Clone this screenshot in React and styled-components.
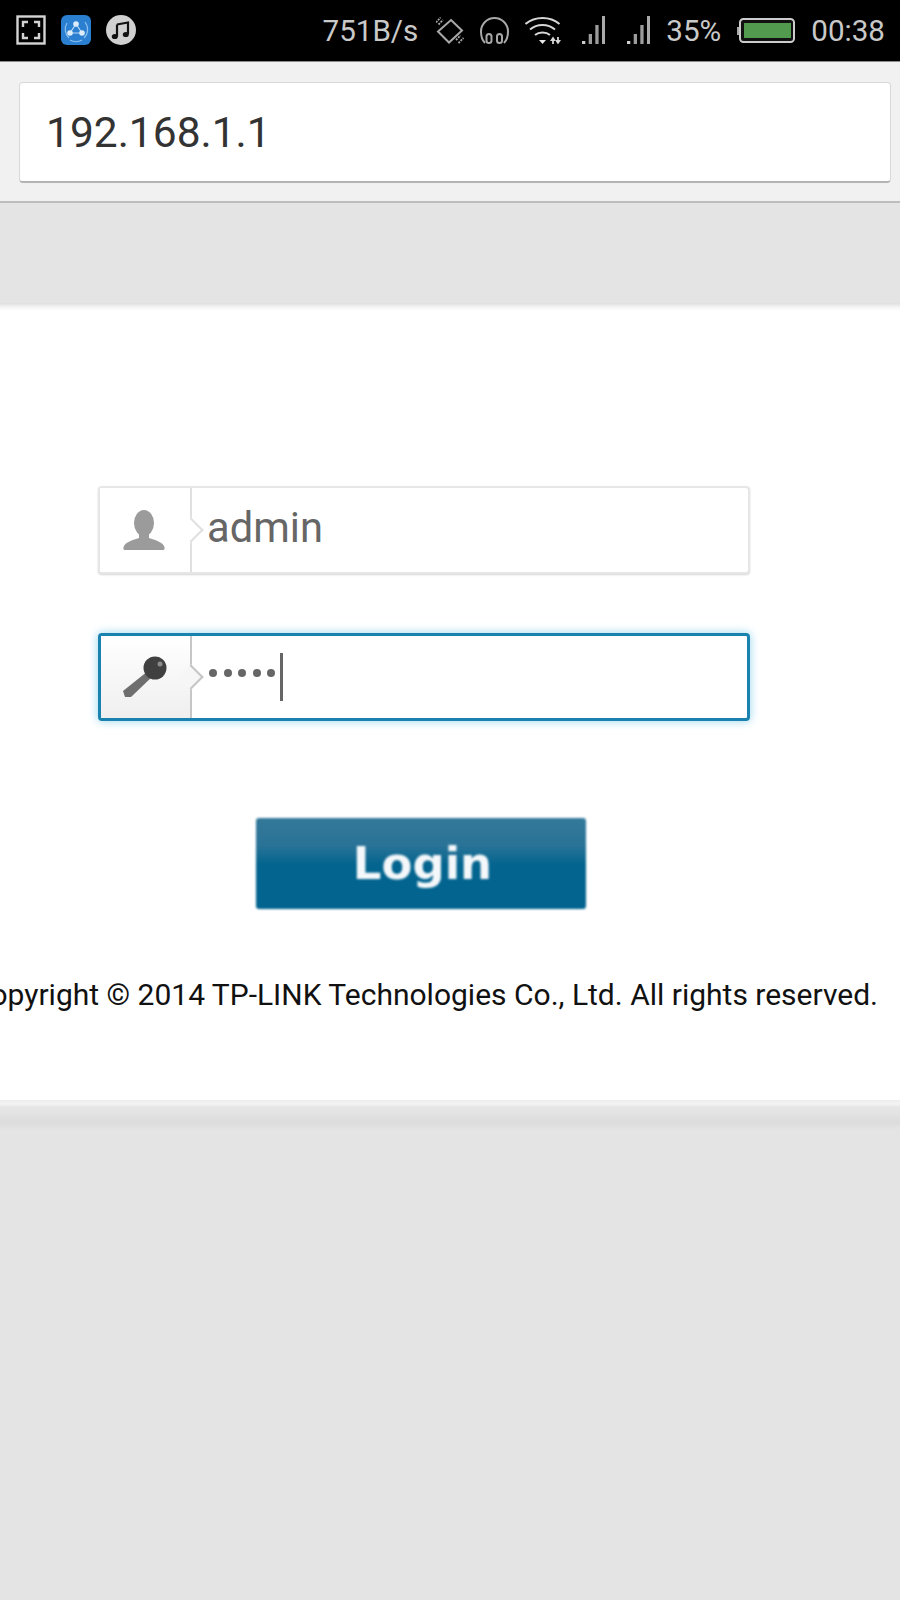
import React from "react";
import styled, { createGlobalStyle } from "styled-components";

const GlobalStyle = createGlobalStyle`
  html, body {
    margin: 0;
    padding: 0;
    background: #e4e4e4;
    font-family: Roboto, "Liberation Sans", sans-serif;
  }
`;

const Page = styled.div`
  width: 900px;
  height: 1600px;
  overflow: hidden;
  display: flex;
  flex-direction: column;
  background: #e4e4e4;
`;

const StatusBar = styled.div`
  height: 62px;
  flex: none;
  box-sizing: border-box;
  padding: 0 15px 1px 16px;
  background: #000;
  color: #c9c9c9;
  display: flex;
  align-items: center;
  justify-content: space-between;
  font-size: 29.6px;
  border-bottom: 1px solid #8a8a8a;
`;

const IconGroup = styled.div`
  display: flex;
  align-items: center;
  gap: ${(p) => p.$gap}px;
`;

const StatusText = styled.span`
  display: block;
  line-height: 1;
  position: relative;
  top: 2px;
  margin-right: ${(p) => p.$mr || 0}px;
`;

const SignalSlot = styled.span`
  display: flex;
  margin-left: ${(p) => p.$ml || 0}px;
`;

const AddressBar = styled.div`
  height: 141px;
  flex: none;
  box-sizing: border-box;
  padding: 20px 9px 18px 19px;
  background: #f1f1f1;
  border-bottom: 2px solid #bdbdbd;
`;

const AddressField = styled.div`
  height: 101px;
  box-sizing: border-box;
  padding-left: 26px;
  background: #fff;
  border: 1px solid #d8d8d8;
  border-bottom: 2px solid #b4b4b4;
  border-radius: 4px;
  display: flex;
  align-items: center;
  font-size: 42.5px;
  color: #333;
`;

const Band = styled.div`
  height: 100px;
  flex: none;
  background: #e4e4e4;
`;

const LoginPanel = styled.div`
  flex: none;
  height: 797px;
  box-sizing: border-box;
  padding-top: 183px;
  background: linear-gradient(#dedede, #f4f4f4 4px, #fff 8px);
  display: flex;
  flex-direction: column;
`;

const FieldRow = styled.div`
  width: 652px;
  height: 88px;
  margin: 0 0 59px 98px;
  box-sizing: border-box;
  flex: none;
  background: #fff;
  border-radius: 4px;
  display: flex;
  border: ${(p) => (p.$focused ? "3px solid #1a82ae" : "2px solid #e6e6e6")};
  box-shadow: ${(p) => (p.$focused ? "0 0 8px 1px #a9dcf0" : "0 1px 2px #d4d4d4")};
`;

const FieldIcon = styled.div`
  --line: ${(p) => (p.$focused ? "#c6c6c6" : "#e0e0e0")};
  --fill: ${(p) => (p.$focused ? "#f6f6f6" : "#fff")};
  width: ${(p) => (p.$focused ? 91 : 92)}px;
  flex: none;
  display: flex;
  align-items: center;
  justify-content: center;
  position: relative;
  box-sizing: border-box;
  padding-right: 2px;
  background: ${(p) => (p.$focused ? "linear-gradient(#fff, #efefef)" : "#fff")};
  border-right: 2px solid var(--line);

  &::after {
    content: "";
    position: absolute;
    right: -10px;
    top: 50%;
    width: 18px;
    height: 18px;
    margin-top: -9px;
    box-sizing: border-box;
    background: var(--fill);
    border-top: 2px solid var(--line);
    border-right: 2px solid var(--line);
    transform: rotate(45deg);
  }

  & > svg {
    filter: blur(0.7px);
  }
`;

const FieldValue = styled.div`
  flex: 1;
  display: flex;
  align-items: center;
  padding-left: 15px;
  padding-bottom: ${(p) => (p.$text ? 5 : 0)}px;
  font-size: 41.7px;
  color: #666;
`;

const Dots = styled.div`
  display: flex;
  gap: 6.5px;
  align-items: center;
  margin: 0 0 8px 2px;
`;

const Dot = styled.span`
  width: 8px;
  height: 8px;
  border-radius: 50%;
  background: #666;
`;

const Caret = styled.span`
  width: 3px;
  height: 48px;
  margin-left: 5px;
  background: #666;
`;

const LoginButton = styled.button`
  width: 330px;
  height: 91px;
  margin: 38px 0 0 256px;
  flex: none;
  padding: 0 0 0 3px;
  border: none;
  border-radius: 3px;
  background: linear-gradient(#34799a 0%, #2a7397 30%, #02648f 52%, #02648f 100%);
  color: #f4f8fa;
  font-family: "DejaVu Sans", sans-serif;
  font-weight: 700;
  font-size: 45px;
  filter: blur(0.8px);
`;

const Copyright = styled.div`
  margin-top: 68px;
  padding-right: 22px;
  font-size: 30px;
  line-height: 36px;
  color: #111;
  white-space: nowrap;
  display: flex;
  justify-content: flex-end;
`;

const Bottom = styled.div`
  flex: 1;
  background: linear-gradient(
    #ececec,
    #f4f4f4 4px,
    #e6e6e6 7px,
    #e2e2e2 15px,
    #dcdcdc 22px,
    #e4e4e4 30px
  );
`;

const FullscreenIcon = () => (
  <svg width="30" height="30" viewBox="0 0 30 30" fill="none" stroke="#d4d4d4">
    <rect x="1.5" y="1.5" width="27" height="27" strokeWidth="2.4" />
    <path d="M7 12V7h5M18 7h5v5M23 18v5h-5M12 23H7v-5" strokeWidth="2.4" />
  </svg>
);

const ShareIcon = () => (
  <svg width="30" height="30" viewBox="0 0 30 30">
    <rect width="30" height="30" rx="6" fill="#2a7fd0" />
    <path d="M6 8A12 12 0 0 0 8 23M24 7A12 12 0 0 1 23 23M9 25A12 12 0 0 0 21 25" fill="none" stroke="#8cc0ee" strokeWidth="1.2" />
    <path d="M15 9L9 18h12z" fill="none" stroke="#b8d8f4" strokeWidth="1.2" />
    <circle cx="15" cy="9" r="2.8" fill="#dcecfa" />
    <circle cx="9" cy="18" r="2.8" fill="#dcecfa" />
    <circle cx="21" cy="18" r="2.8" fill="#dcecfa" />
  </svg>
);

const MusicIcon = () => (
  <svg width="30" height="30" viewBox="0 0 30 30">
    <circle cx="15" cy="15" r="15" fill="#d0d0d0" />
    <path d="M11 9.5L22 7.5V19" fill="none" stroke="#111" strokeWidth="2.2" />
    <path d="M11 9.5V21.5" fill="none" stroke="#111" strokeWidth="2.2" />
    <ellipse cx="8.8" cy="21.5" rx="3" ry="2.6" fill="#111" />
    <ellipse cx="19.8" cy="19.5" rx="3" ry="2.6" fill="#111" />
  </svg>
);

const RotateIcon = () => (
  <svg width="28" height="27" viewBox="0 0 28 27" fill="none" stroke="#a8a8a8" strokeWidth="2">
    <path d="M15 3L26 13.500L13 25.500L2 14.500z" />
    <path d="M0 5.500L4.500 0.500M2.500 7.500L7 3M20 23L24.500 18.500M22.500 26L27.500 21" strokeWidth="1.8" strokeDasharray="2 1" />
  </svg>
);

const HeadsetIcon = () => (
  <svg width="29" height="27" viewBox="0 0 29 27" fill="none" stroke="#a8a8a8" strokeWidth="2">
    <path d="M5 26C2 23 1 19 1 14.500C1 7 7 1 14.500 1S28 7 28 14.500C28 19 27 23 24 26" />
    <rect x="6.500" y="17" width="5" height="9" rx="2.500" />
    <rect x="17" y="17" width="5" height="9" rx="2.500" />
  </svg>
);

const WifiIcon = () => (
  <svg width="36" height="27" viewBox="0 0 36 27" fill="none" stroke="#d6d6d6" strokeWidth="2">
    <path d="M0.500 7C10 -1 25 -1 34.500 7" />
    <path d="M5 12.500C12 6.500 23 6.500 30 12.500" />
    <path d="M10 18C14 14.500 21 14.500 25 18" />
    <path d="M14 23h7l-3.500 4z" fill="#e6e6e6" stroke="none" />
    <path d="M28 21v6M33 20v6" strokeWidth="1.800" />
    <path d="M25 24l3-4.500 3 4.500zM30 23l3 4.500 3-4.500z" fill="#d6d6d6" stroke="none" />
  </svg>
);

const SignalIcon = () => (
  <svg width="23" height="28" viewBox="0 0 23 28" fill="#9c9c9c">
    <rect x="0" y="25" width="3.300" height="3" fill="#cccccc" />
    <rect x="6.700" y="18" width="3.300" height="10" />
    <rect x="13.300" y="9" width="3.300" height="19" />
    <rect x="20" y="0" width="3" height="28" fill="#aaaaaa" />
  </svg>
);

const BatteryIcon = () => (
  <svg width="58" height="25" viewBox="0 0 58 25">
    <rect x="0" y="9" width="3" height="8" fill="#a8a8a8" />
    <rect x="3" y="1" width="54" height="23" rx="3.500" fill="#111" stroke="#cccccc" strokeWidth="2" />
    <rect x="7" y="5" width="47" height="15" fill="#529a4e" />
  </svg>
);

const PersonIcon = () => (
  <svg width="44" height="40" viewBox="0 0 44 40" fill="#9b9b9b">
    <ellipse cx="22" cy="13" rx="10" ry="13" />
    <path d="M17 24h10v4c6 2 13 4 15 8c1 2 1 4-1 4H3c-2 0-2-2-1-4c2-4 9-6 15-8z" />
  </svg>
);

const KeyIcon = () => (
  <svg width="46" height="42" viewBox="0 0 46 42">
    <path d="M26 15L1 35l2 6 6 0L31 20z" fill="#6e6e6e" />
    <circle cx="33" cy="12" r="11.500" fill="#404040" />
    <circle cx="38" cy="8" r="2.500" fill="#8c8c8c" />
  </svg>
);

export default function App() {
  return (
    <>
      <GlobalStyle />
      <Page>
        <StatusBar>
          <IconGroup $gap={15}>
            <FullscreenIcon />
            <ShareIcon />
            <MusicIcon />
          </IconGroup>
          <IconGroup $gap={16}>
            <StatusText $mr={2}>751B/s</StatusText>
            <RotateIcon />
            <HeadsetIcon />
            <WifiIcon />
            <SignalSlot $ml={5}>
              <SignalIcon />
            </SignalSlot>
            <SignalSlot $ml={6}>
              <SignalIcon />
            </SignalSlot>
            <StatusText>35%</StatusText>
            <BatteryIcon />
            <StatusText>00:38</StatusText>
          </IconGroup>
        </StatusBar>
        <AddressBar>
          <AddressField>192.168.1.1</AddressField>
        </AddressBar>
        <Band />
        <LoginPanel>
          <FieldRow>
            <FieldIcon>
              <PersonIcon />
            </FieldIcon>
            <FieldValue $text>admin</FieldValue>
          </FieldRow>
          <FieldRow $focused>
            <FieldIcon $focused>
              <KeyIcon />
            </FieldIcon>
            <FieldValue>
              <Dots>
                {[0, 1, 2, 3, 4].map((i) => (
                  <Dot key={i} />
                ))}
              </Dots>
              <Caret />
            </FieldValue>
          </FieldRow>
          <LoginButton>Login</LoginButton>
          <Copyright>Copyright © 2014 TP-LINK Technologies Co., Ltd. All rights reserved.</Copyright>
        </LoginPanel>
        <Bottom />
      </Page>
    </>
  );
}
